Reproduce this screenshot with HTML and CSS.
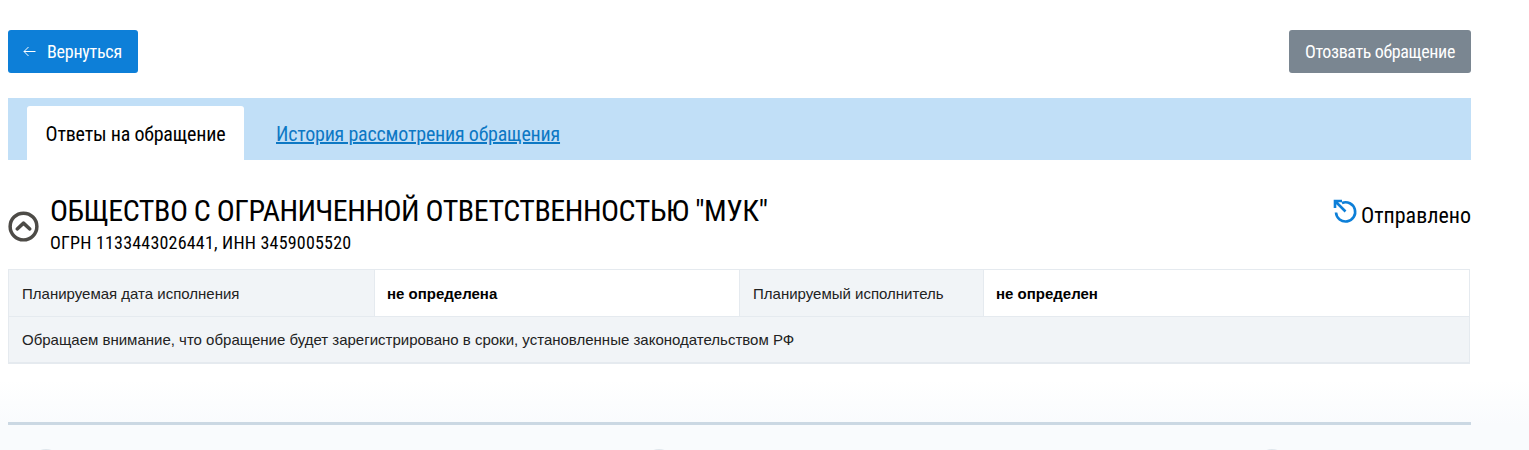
FILE: index.html
```html
<!DOCTYPE html>
<html lang="ru">
<head>
    <meta charset="UTF-8">
    <title>Обращение</title>
    <link rel="stylesheet" href="styles.css">
</head>
<body>
    <div class="container">
        <div class="top-buttons">
            <a class="btn btn-blue">
                <svg class="arrow" width="13" height="11" viewBox="0 0 13 11">
                    <path d="M12.5 5.5 H1 M5.5 1 L1 5.5 L5.5 10" fill="none" stroke="#fff" stroke-width="1"/>
                </svg>
                Вернуться
            </a>
            <a class="btn btn-gray">Отозвать обращение</a>
        </div>
        <div class="tabs">
            <div class="tab active">Ответы на обращение</div>
            <a class="tab link">История рассмотрения обращения</a>
        </div>
        <div class="org-head">
            <svg class="toggle" width="31" height="31" viewBox="0 0 32 32">
                <circle cx="16" cy="16" r="13.8" fill="none" stroke="#4d4b47" stroke-width="3.6"/>
                <path d="M9.5 18.5 L16 12.5 L22.5 18.5" fill="none" stroke="#4d4b47" stroke-width="3.6" stroke-linecap="round" stroke-linejoin="round"/>
            </svg>
            <div class="org-name">
                <h2>ОБЩЕСТВО С ОГРАНИЧЕННОЙ ОТВЕТСТВЕННОСТЬЮ "МУК"</h2>
                <div class="org-ids">ОГРН 1133443026441, ИНН 3459005520</div>
            </div>
            <div class="status">
                <svg width="25" height="25" viewBox="0 0 25 25">
                    <path d="M9 4 A9.6 9.6 0 1 1 3 13.5" fill="none" stroke="#0d7fd8" stroke-width="2.6"/>
                    <path d="M2 9 V2 H9 M2 2 L12.5 12.5" fill="none" stroke="#0d7fd8" stroke-width="2.6"/>
                </svg>
                <span>Отправлено</span>
            </div>
        </div>
        <div class="info">
            <div class="info-row">
                <div class="cell label c1">Планируемая дата исполнения</div>
                <div class="cell value c2">не определена</div>
                <div class="cell label c3">Планируемый исполнитель</div>
                <div class="cell value c4">не определен</div>
            </div>
            <div class="cell label note">Обращаем внимание, что обращение будет зарегистрировано в сроки, установленные законодательством РФ</div>
        </div>
        <div class="divider"></div>
        <div class="footer-icons">
            <span class="round"></span>
            <span class="round"></span>
            <span class="round"></span>
        </div>
    </div>
</body>
</html>
```
FILE: styles.css
```css
body {
    margin: 0;
    height: 450px;
    overflow: hidden;
    background: linear-gradient(180deg, #fff 0, #fff 380px, #f9fbfd 425px, #f9fbfd 100%);
    font-family: Roboto, "Liberation Sans", sans-serif;
    color: #000;
}

.container {
    width: 1463px;
    margin-left: 8px;
    padding-top: 30px;
}

.top-buttons {
    display: flex;
    justify-content: space-between;
}

.btn {
    display: flex;
    align-items: center;
    height: 43px;
    padding: 0 16px;
    border-radius: 3px;
    color: #fff;
    font-size: 18px;
    font-weight: 400;
    font-stretch: condensed;
    letter-spacing: -0.25px;
}

.btn-blue {
    background: #0d7fd8;
    padding-left: 15px;
}

.btn-gray {
    background: #7a8691;
    letter-spacing: -0.36px;
}

.arrow {
    margin-right: 11px;
}

.tabs {
    display: flex;
    height: 54px;
    margin-top: 25px;
    padding: 8px 0 0 19px;
    background: #c1dff7;
}

.tab {
    font-size: 20px;
    font-weight: 400;
    font-stretch: condensed;
    letter-spacing: -0.2px;
    line-height: 56px;
}

.tab.active {
    width: 217px;
    text-align: center;
    background: #fff;
    border-radius: 3px 3px 0 0;
}

.tab.link {
    margin-left: 32px;
    color: #0d78c4;
    text-decoration: underline;
}

.org-head {
    display: flex;
    align-items: flex-start;
    margin-top: 34px;
}

.toggle {
    margin-top: 17px;
    margin-right: 11px;
}

.org-name {
    flex: 1;
}

h2 {
    margin: 0;
    font-size: 30px;
    font-weight: 400;
    font-stretch: condensed;
    letter-spacing: -0.48px;
    line-height: 34px;
}

.org-ids {
    font-size: 18px;
    font-stretch: condensed;
    letter-spacing: 0.2px;
    line-height: 22px;
    margin-top: 4px;
}

.status {
    display: flex;
    align-items: flex-start;
    margin-top: 5px;
    font-size: 22px;
    font-stretch: condensed;
}

.status span {
    margin: 4px 0 0 3px;
    line-height: 26px;
}

.info {
    width: 1462px;
    margin-top: 15px;
    border: 1px solid #e5eaef;
    border-bottom-width: 2px;
    box-sizing: border-box;
    font-family: "Liberation Sans", Arial, sans-serif;
    font-size: 15px;
}

.info-row {
    display: flex;
    height: 46px;
    border-bottom: 1px solid #e5eaef;
}

.cell {
    display: flex;
    align-items: center;
    padding: 0 13px;
    box-sizing: border-box;
}

.label {
    background: #f1f4f7;
    color: #222;
}

.value {
    font-weight: 700;
    border-left: 1px solid #e5eaef;
    padding-left: 12px;
}

.c1 { width: 365px; }
.c2 { width: 366px; border-right: 1px solid #e5eaef; }
.c3 { width: 243px; }
.c4 { flex: 1; }

.note {
    height: 45px;
}

.divider {
    width: 1463px;
    height: 3px;
    margin-top: 58px;
    background: #cbd8e3;
}

.footer-icons {
    display: flex;
    align-items: flex-start;
    gap: 583px;
    height: 2px;
    margin-top: 24px;
    padding-left: 23px;
    overflow: hidden;
}

.round {
    flex: none;
    width: 30px;
    height: 30px;
    border-radius: 50%;
    background: #dfe6ec;
}
```
